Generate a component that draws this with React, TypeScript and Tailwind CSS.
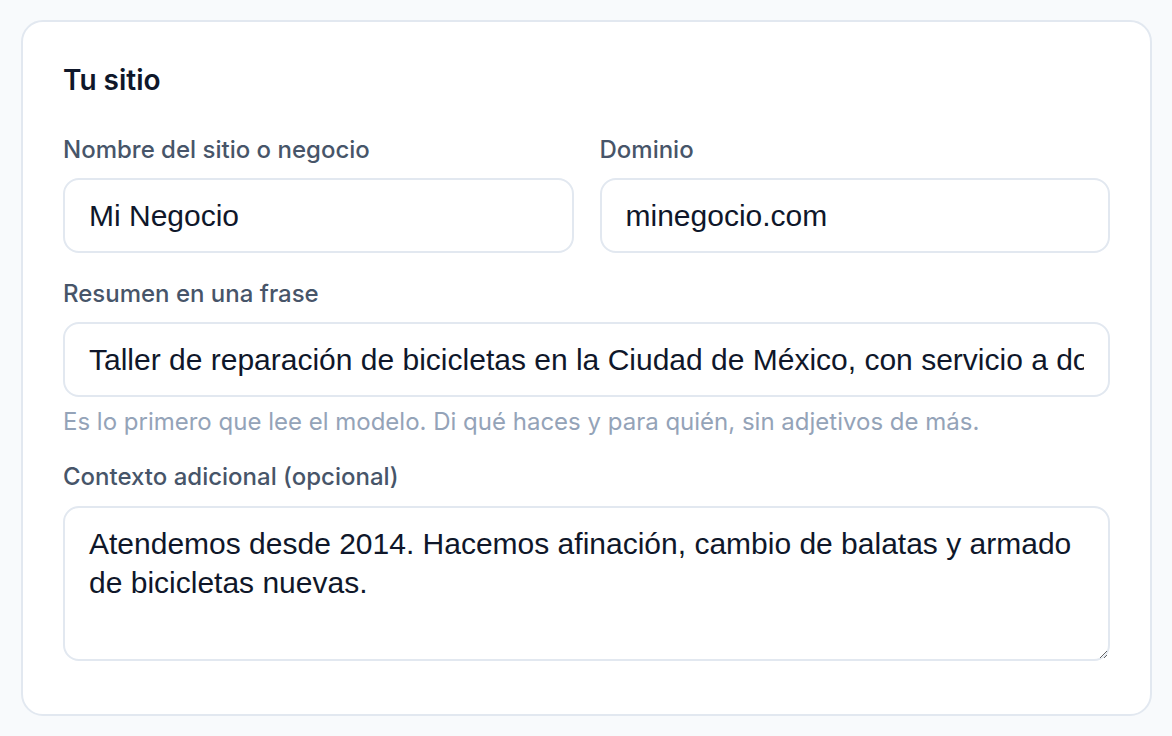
import React from "react";

export default function App() {
  const inter = { fontFamily: "Inter, 'Noto Sans', sans-serif" };
  const arial = { fontFamily: "'Liberation Sans', Arial, sans-serif" };
  return (
    <div className="min-h-[736px] w-full bg-[#f8fafc] pl-[21px] pr-[20px] pt-[20px] pb-[20px]" style={inter}>
      <div className="rounded-[22px] border-2 border-[#e2e8f0] bg-white px-[40px] pt-[40px] pb-[53px]">
        <h2 className="text-[28px] leading-[36px] font-semibold text-[#0f172a]">Tu sitio</h2>
        <div className="mt-[36px] grid grid-cols-2 gap-[26px]">
          <div className="flex flex-col gap-[12px]">
            <label className="text-[24px] leading-[32px] font-medium text-[#475569]">Nombre del sitio o negocio</label>
            <input
              defaultValue="Mi Negocio"
              className="h-[75px] rounded-[16px] border-2 border-[#e2e8f0] bg-white px-[24px] text-[30px] text-[#0f172a] outline-none"
              style={arial}
            />
          </div>
          <div className="flex flex-col gap-[12px]">
            <label className="text-[24px] leading-[32px] font-medium text-[#475569]">Dominio</label>
            <input
              defaultValue="minegocio.com"
              className="h-[75px] rounded-[16px] border-2 border-[#e2e8f0] bg-white px-[24px] text-[30px] text-[#0f172a] outline-none"
              style={arial}
            />
          </div>
        </div>
        <div className="mt-[25px] flex flex-col gap-[12px]">
          <label className="text-[24px] leading-[32px] font-medium text-[#475569]">Resumen en una frase</label>
          <input
            defaultValue="Taller de reparación de bicicletas en la Ciudad de México, con servicio a domicilio."
            className="h-[75px] rounded-[16px] border-2 border-[#e2e8f0] bg-white px-[24px] text-[30px] text-[#0f172a] outline-none"
            style={arial}
          />
        </div>
        <p className="mt-[9px] text-[24px] leading-[32px] text-[#94a3b8]">
          Es lo primero que lee el modelo. Di qué haces y para quién, sin adjetivos de más.
        </p>
        <div className="mt-[23px] flex flex-col gap-[13px]">
          <label className="text-[24px] leading-[32px] font-medium text-[#475569]">Contexto adicional (opcional)</label>
          <textarea
            defaultValue="Atendemos desde 2014. Hacemos afinación, cambio de balatas y armado de bicicletas nuevas."
            className="h-[155px] rounded-[16px] border-2 border-[#e2e8f0] bg-white px-[24px] py-[16px] text-[30px] leading-[39px] text-[#0f172a] outline-none"
            style={arial}
          />
        </div>
      </div>
    </div>
  );
}
